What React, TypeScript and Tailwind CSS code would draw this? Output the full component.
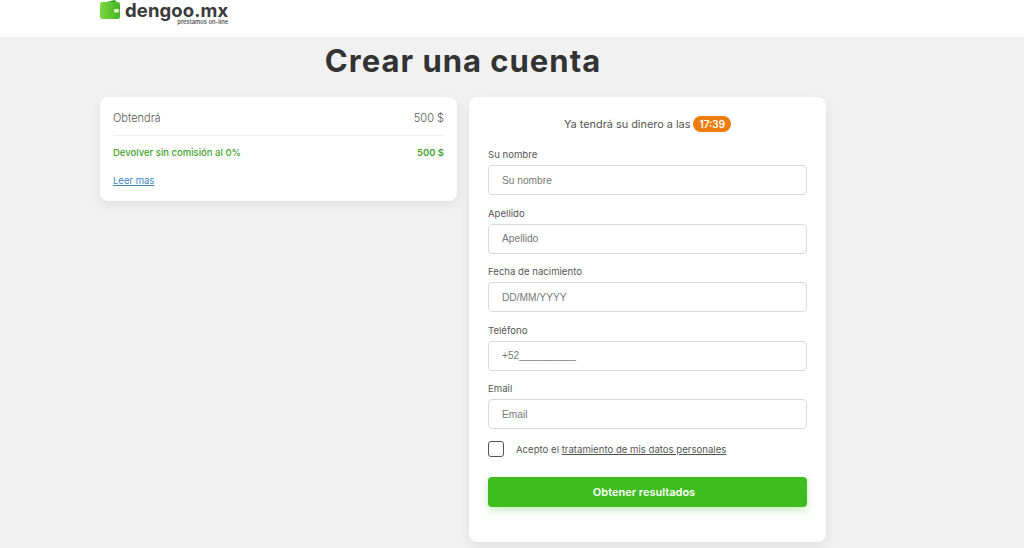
const fields = [
  { label: "Su nombre", placeholder: "Su nombre" },
  { label: "Apellido", placeholder: "Apellido" },
  { label: "Fecha de nacimiento", placeholder: "DD/MM/YYYY" },
  { label: "Teléfono", placeholder: "+52__________" },
  { label: "Email", placeholder: "Email" },
];

function Logo() {
  return (
    <div className="flex items-start gap-[5px]">
      <svg width="20" height="20" viewBox="0 0 20 20">
        <defs>
          <linearGradient id="wallet" x1="0" y1="0" x2="1" y2="0">
            <stop offset="0" stopColor="#7ed63f" />
            <stop offset="1" stopColor="#43b524" />
          </linearGradient>
        </defs>
        <path d="M2 3 L15 0 L17 3 Z" fill="#2f9e1f" />
        <rect x="0" y="2" width="20" height="17" rx="2.5" fill="url(#wallet)" />
        <rect x="14" y="9" width="5" height="3.5" rx="1" fill="#d9f5c8" />
      </svg>
      <div className="flex flex-col items-end pt-[1px]">
        <div className="text-[18.5px] leading-[18px] font-bold text-[#3a3a3a] tracking-[0.1px]">dengoo.mx</div>
        <div className="text-[5.8px] leading-[6px] font-semibold text-[#555]">préstamos on-line</div>
      </div>
    </div>
  );
}

export default function App() {
  return (
    <div className="h-[548px] overflow-hidden bg-[#f1f1f1] font-['Inter',sans-serif] text-[#444]">
      <header className="h-[37px] bg-white pl-[100px] overflow-hidden">
        <Logo />
      </header>

      <div className="ml-[100px] w-[726px]">
        <h1 className="mt-[4px] h-[56px] text-center text-[31px] leading-[40px] font-bold text-[#333] tracking-[1px]">
          Crear una cuenta
        </h1>

        <div className="flex items-start gap-[12px]">
          <div className="w-[357px] h-[104px] bg-white rounded-[8px] shadow-[0_4px_12px_rgba(0,0,0,0.07)] px-[13px]">
            <div className="flex justify-between h-[39px] pt-[14px] border-b border-[#eeeeee] text-[11px] leading-[15px] font-light text-[#555]">
              <span>Obtendrá</span>
              <span>500 $</span>
            </div>
            <div className="flex justify-between pt-[10px] text-[9.5px] leading-[13px] font-medium text-[#3fa32a]">
              <span>Devolver sin comisión al 0%</span>
              <span className="font-semibold">500 $</span>
            </div>
            <a className="block mt-[15px] text-[9.5px] leading-[13px] text-[#3b87c4] underline">Leer mas</a>
          </div>

          <div className="w-[357px] h-[445px] bg-white rounded-[8px] shadow-[0_4px_12px_rgba(0,0,0,0.07)] px-[19px]">
            <div className="flex items-center justify-center gap-[3px] h-[20px] mt-[17px] text-[10.9px] text-[#555]">
              <span>Ya tendrá su dinero a las</span>
              <span className="h-[16px] px-[6px] rounded-[8px] bg-[#ee7d11] text-white text-[10px] leading-[16px] font-semibold">17:39</span>
            </div>

            <div className="mt-[13px] flex flex-col gap-[10.5px]">
              {fields.map((f) => (
                <div key={f.label}>
                  <label className="block text-[9.6px] leading-[15px] text-[#555]">{f.label}</label>
                  <input
                    readOnly
                    placeholder={f.placeholder}
                    className="mt-[3px] block w-full h-[30px] rounded-[4px] border border-[#d9d9d9] bg-white px-[13px] font-['Liberation_Sans',sans-serif] text-[10.2px] placeholder:text-[#777] outline-none"
                  />
                </div>
              ))}
            </div>

            <div className="mt-[12px] flex items-start h-[17px]">
              <span className="w-[16px] h-[16px] rounded-[3px] border border-[#555] bg-white" />
              <span className="ml-[12px] text-[9.6px] leading-[18px] text-[#555]">
                Acepto el <span className="underline">tratamiento de mis datos personales</span>
              </span>
            </div>

            <button className="mt-[19px] block w-full h-[30px] pr-[7px] rounded-[4px] bg-[#3dbd1e] shadow-[0_3px_8px_rgba(61,189,30,0.3)] text-white text-[11px] font-semibold">
              Obtener resultados
            </button>
          </div>
        </div>
      </div>
    </div>
  );
}
